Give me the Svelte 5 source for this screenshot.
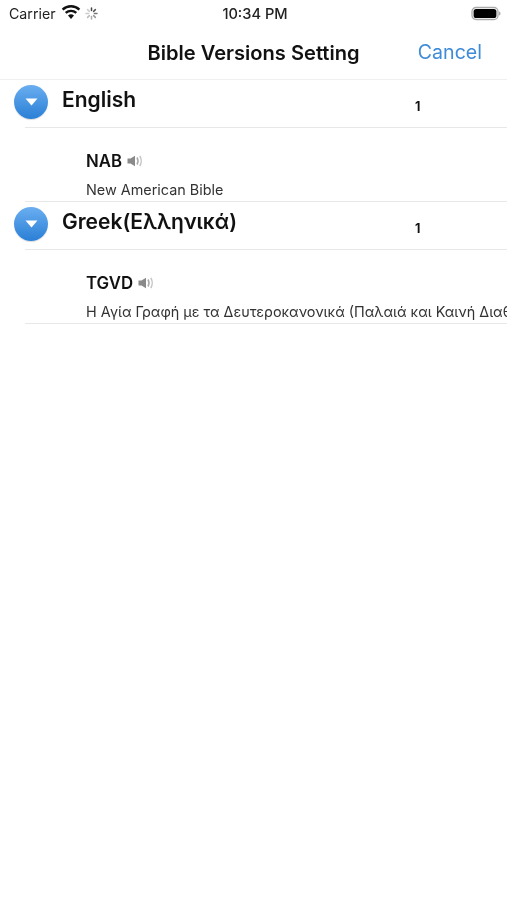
<script>
	const groups = [
		{
			name: 'English',
			count: 1,
			version: { code: 'NAB', title: 'New American Bible' }
		},
		{
			name: 'Greek(Ελληνικά)',
			count: 1,
			version: { code: 'TGVD', title: 'Η Αγία Γραφή με τα Δευτεροκανονικά (Παλαιά και Καινή Διαθήκη)' }
		}
	];
</script>

<div class="screen">
	<div class="status">
		<div class="status-left">
			<span>Carrier</span>
			<svg class="wifi" width="20" height="15" viewBox="0 0 20 15">
				<path d="M10 14 L7 10.4 A4.8 4.8 0 0 1 13 10.4 Z" fill="#111" />
				<path d="M4.7 7.9 A8 8 0 0 1 15.3 7.9" fill="none" stroke="#111" stroke-width="2.4" />
				<path d="M1.6 4.6 A12.4 12.4 0 0 1 18.4 4.6" fill="none" stroke="#111" stroke-width="2.4" />
			</svg>
			<svg class="spinner" width="13" height="13" viewBox="0 0 13 13">
				<g stroke-width="1.5" stroke-linecap="round">
					<path d="M6.5 1v2.6" stroke="#444" />
					<path d="M10.4 2.6 8.6 4.4" stroke="#555" />
					<path d="M12 6.5H9.4" stroke="#777" />
					<path d="M10.4 10.4 8.6 8.6" stroke="#999" />
					<path d="M6.5 12V9.4" stroke="#aaa" />
					<path d="M2.6 10.4 4.4 8.6" stroke="#bbb" />
					<path d="M1 6.5h2.6" stroke="#ccc" />
					<path d="M2.6 2.6 4.4 4.4" stroke="#ccc" />
				</g>
			</svg>
		</div>
		<span class="time">10:34 PM</span>
		<svg class="battery" width="30" height="15" viewBox="0 0 30 15">
			<rect x="1" y="1.5" width="26" height="12" rx="4" fill="none" stroke="#aaa" stroke-width="1.3" />
			<rect x="2.6" y="3" width="22.8" height="9" rx="2.6" fill="#000" />
			<path d="M28 5.5c1 .3 1.5 1 1.5 2s-.5 1.7-1.5 2z" fill="#aaa" />
		</svg>
	</div>

	<div class="nav">
		<span class="nav-title">Bible Versions Setting</span>
		<span class="cancel">Cancel</span>
	</div>

	{#each groups as group}
		<section class="group">
			<div class="group-head">
				<div class="badge">
					<svg width="13" height="8" viewBox="0 0 13 8"><path d="M0.5 0.5h12L6.5 7.5z" fill="#fff" /></svg>
				</div>
				<span class="group-name">{group.name}</span>
				<span class="count">{group.count}</span>
			</div>
			<div class="version">
				<div class="code">
					<span>{group.version.code}</span>
					<svg width="16" height="12" viewBox="0 0 16 12">
						<path d="M0.5 3.5h3L8 0.8v10.4L3.5 8.5h-3z" fill="#8a8a8a" />
						<path d="M10 2.5c1.2 2 1.2 5 0 7" fill="none" stroke="#aaa" stroke-width="1.5" />
						<path d="M12.8 1c1.8 2.8 1.8 7.2 0 10" fill="none" stroke="#c4c4c4" stroke-width="1.5" />
					</svg>
				</div>
				<div class="title">{group.version.title}</div>
			</div>
		</section>
	{/each}
</div>

<style>
	:global(body) {
		margin: 0;
		background: #fff;
	}

	.screen {
		width: 507px;
		height: 900px;
		overflow: hidden;
		font-family: Inter, "Liberation Sans", sans-serif;
		color: #111;
		filter: blur(0.4px);
	}

	.status {
		height: 27px;
		padding: 0 6px 0 9px;
		display: grid;
		grid-template-columns: 1fr auto 1fr;
		align-items: center;
		font-size: 14.2px;
		color: #222;
	}

	.status-left {
		display: flex;
		align-items: center;
		gap: 5px;
	}

	.wifi {
		margin-top: -2px;
	}

	.spinner {
		margin-left: -1px;
	}

	.time {
		font-size: 14.6px;
		font-weight: 500;
	}

	.battery {
		justify-self: end;
	}

	.nav {
		height: 52px;
		display: grid;
		grid-template-columns: 1fr auto 1fr;
		align-items: center;
		border-bottom: 1px solid #efefef;
	}

	.nav-title {
		grid-column: 2;
		font-size: 20.1px;
		font-weight: 600;
		margin-top: -1px;
	}

	.cancel {
		grid-column: 3;
		justify-self: end;
		margin-right: 25px;
		margin-top: -2px;
		font-size: 19.6px;
		color: #3f8bd8;
	}

	.group-head {
		height: 47px;
		margin-left: 25px;
		position: relative;
		display: flex;
		align-items: center;
		border-bottom: 1px solid #e8e8e8;
	}

	.badge {
		position: absolute;
		left: -11px;
		top: 5px;
		width: 34px;
		height: 34px;
		border-radius: 50%;
		background: linear-gradient(#6aaef0, #2a7fd6);
		display: flex;
		align-items: center;
		justify-content: center;
		box-shadow: 0 1px 1px rgba(0, 0, 0, 0.15);
	}

	.group-name {
		margin-left: 37px;
		margin-top: -8px;
		font-size: 21px;
		font-weight: 600;
	}

	.count {
		position: absolute;
		left: 390px;
		top: 19px;
		font-size: 12.5px;
		font-weight: 700;
	}

	.version {
		height: 73px;
		margin-left: 25px;
		padding-left: 61px;
		position: relative;
		border-bottom: 1px solid #e8e8e8;
		white-space: nowrap;
		overflow: hidden;
	}

	.code {
		position: absolute;
		top: 23px;
		display: flex;
		align-items: center;
		gap: 5px;
		font-size: 16.8px;
		font-weight: 600;
	}

	.title {
		position: absolute;
		top: 53px;
		font-size: 14.4px;
		color: #333;
	}
</style>
